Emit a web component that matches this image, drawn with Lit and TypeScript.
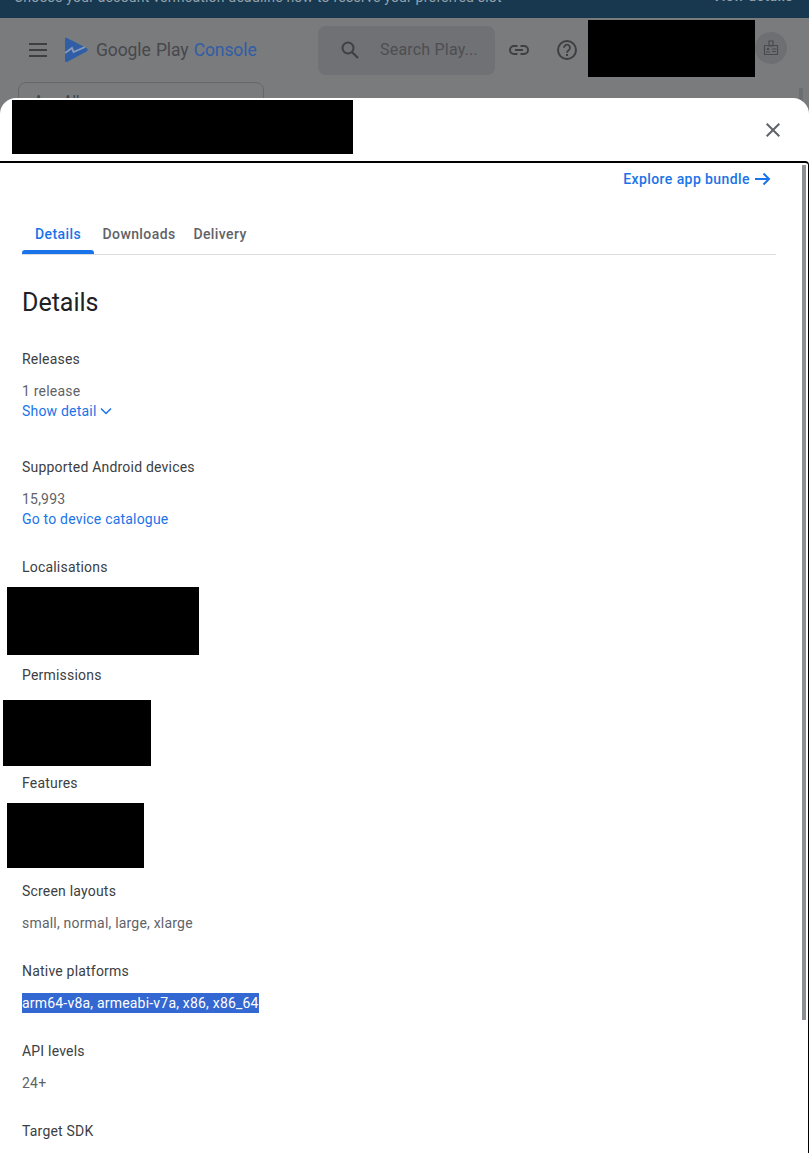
import { LitElement, html, css, svg } from "lit";
import { customElement } from "lit/decorators.js";

const arrow = svg`<path d="M1 8h14M9.5 2.500 15 8l-5.500 5.500" fill="none" stroke="currentColor" stroke-width="2"/>`;
const chevron = svg`<path d="M1 1.500 6 6.500l5-5" fill="none" stroke="currentColor" stroke-width="1.500"/>`;

@customElement("app-root")
export class AppRoot extends LitElement {
  static styles = css`
    :host {
      display: block;
      position: relative;
      width: 809px;
      height: 1153px;
      overflow: hidden;
      background: #7a7b7d;
      font-family: Roboto, "Liberation Sans", sans-serif;
      font-size: 14px;
      line-height: 20px;
      letter-spacing: 0.2px;
    }
    svg { display: block; flex: none; }
    .banner {
      box-sizing: border-box;
      height: 18px;
      background: #17384f;
      color: #96a3ad;
      padding: 0 16px 11px 14px;
      display: flex;
      justify-content: space-between;
      align-items: flex-end;
      overflow: hidden;
    }
    .banner b { font-weight: 500; letter-spacing: 0.4px; position: relative; top: -1px; }
    .header {
      height: 64px;
      display: flex;
      align-items: center;
      padding-left: 29px;
      color: #3e3f42;
    }
    .menu { margin-right: 18px; }
    .brand {
      margin-left: 8px;
      width: 159px;
      font-size: 17.5px;
      letter-spacing: -0.1px;
      word-spacing: 1px;
      color: #47484c;
      white-space: nowrap;
    }
    .brand span { color: #2f5ea6; }
    .search {
      box-sizing: border-box;
      width: 177px;
      height: 49px;
      margin-left: 63px;
      border-radius: 8px;
      background: #707174;
      display: flex;
      align-items: center;
      padding-left: 23px;
      gap: 21px;
      font-size: 16px;
      color: #4d4e51;
    }
    .link-icon { margin-left: 14px; }
    .help-icon { margin-left: 28px; }
    .top-redact {
      width: 167px;
      height: 57px;
      margin: -3px 0 0 11px;
      background: #000;
    }
    .avatar {
      width: 32px;
      height: 32px;
      margin-top: -4px;
      border-radius: 50%;
      background: #6e6f72;
      display: flex;
      align-items: center;
      justify-content: center;
    }
    .filter {
      box-sizing: border-box;
      width: 246px;
      height: 40px;
      margin-left: 18px;
      border: 1px solid #66676a;
      border-radius: 8px;
      padding: 8px 0 0 15px;
      color: #3e3f42;
    }
    .page-scroll {
      position: absolute;
      left: 799px;
      top: 88px;
      width: 4px;
      height: 30px;
      background: #6d6e71;
    }
    .dialog {
      position: absolute;
      left: 0;
      right: 0;
      top: 98px;
      bottom: 0;
      background: #fff;
      border-radius: 16px 16px 0 0;
      display: flex;
      flex-direction: column;
      overflow: hidden;
    }
    .dialog-head {
      height: 63px;
      flex: none;
      display: flex;
      justify-content: space-between;
      align-items: center;
      padding: 0 29px 0 12px;
    }
    .title-redact {
      width: 341px;
      height: 54px;
      align-self: flex-start;
      margin-top: 2px;
      background: #000;
    }
    .body {
      position: relative;
      flex: 1;
      box-sizing: border-box;
      border-top: 2px solid #000;
      border-right: 1px solid #000;
      border-top-right-radius: 4px;
      padding: 6px 32px 0 22px;
      overflow: hidden;
    }
    .thumb {
      position: absolute;
      left: 802px;
      top: 2px;
      width: 4px;
      height: 855px;
      background: #8b8f94;
    }
    .explore {
      display: flex;
      justify-content: flex-end;
      align-items: center;
      gap: 4px;
      padding-right: 5px;
      color: #1a73e8;
      font-weight: 500;
      letter-spacing: 0.42px;
    }
    .tabs {
      display: flex;
      margin-top: 25px;
      height: 40px;
      border-bottom: 1px solid #dadce0;
      line-height: 40px;
      font-weight: 500;
      letter-spacing: 0.4px;
      color: #5f6368;
    }
    .tab { position: relative; padding: 0 8.5px; min-width: 55px; text-align: center; }
    .tab.active { color: #1a73e8; }
    .tab.active::after {
      content: "";
      position: absolute;
      left: 0;
      right: 0;
      bottom: 0;
      height: 4px;
      border-radius: 3px 3px 0 0;
      background: #1a73e8;
    }
    h1 {
      margin: 32px 0 30px;
      font-size: 25px;
      line-height: 32px;
      font-weight: 400;
      letter-spacing: 0;
      color: #202124;
    }
    .section { position: relative; margin-bottom: 28px; }
    .section.wide { margin-bottom: 36px; }
    .label { color: #3c4043; margin-bottom: 12px; }
    .value { color: #5f6368; }
    .block { height: 48px; }
    .anchor { color: #1a73e8; display: flex; align-items: center; gap: 3px; }
    .selected {
      display: inline-block;
      background: #3367d1;
      color: #fff;
    }
    .redact { position: absolute; background: #000; }
    .r1 { left: -15px; top: 30px; width: 192px; height: 68px; }
    .r2 { left: -19px; top: 35px; width: 148px; height: 66px; }
    .r3 { left: -15px; top: 30px; width: 137px; height: 65px; }
  `;

  private field(label: string, value: string) {
    return html`<div class="section">
      <div class="label">${label}</div>
      <div class="value">${value}</div>
    </div>`;
  }

  private hidden(label: string, cls: string) {
    return html`<div class="section">
      <div class="label">${label}</div>
      <div class="block"></div>
      <div class="redact ${cls}"></div>
    </div>`;
  }

  render() {
    return html`
      <div class="banner">
        <span>Choose your account verification deadline now to reserve your preferred slot</span>
        <b>View details</b>
      </div>
      <div class="header">
        <svg class="menu" width="18" height="14" viewBox="0 0 18 14">
          <path d="M0 1h18M0 7h18M0 13h18" stroke="currentColor" stroke-width="2"/>
        </svg>
        <svg width="23" height="26" viewBox="0 0 23 26">
          <path d="M2 1 21.500 11c1.500 1 1.500 2.500 0 3.400L2 25c-1 .4-2-.1-2-1.200V2C0 1 1 .5 2 1Z" fill="#2f5ea6"/>
          <path d="M0 16 7 11l1.500 4L20 10" fill="none" stroke="#8a9bb8" stroke-width="1.800"/>
        </svg>
        <div class="brand">Google Play <span>Console</span></div>
        <div class="search">
          <svg width="18" height="18" viewBox="0 0 18 18">
            <circle cx="7" cy="7" r="5.500" fill="none" stroke="#3e3f42" stroke-width="2"/>
            <path d="m11 11 6 6" stroke="#3e3f42" stroke-width="2.200"/>
          </svg>
          <span>Search Play...</span>
        </div>
        <svg class="link-icon" width="20" height="10" viewBox="0 0 20 10">
          <path d="M8.500 1H5a4 4 0 0 0 0 8h3.500M11.500 1H15a4 4 0 0 1 0 8h-3.500M6 5h8" fill="none" stroke="currentColor" stroke-width="2"/>
        </svg>
        <svg class="help-icon" width="20" height="20" viewBox="0 0 20 20">
          <circle cx="10" cy="10" r="9" fill="none" stroke="currentColor" stroke-width="2"/>
          <path d="M7 7.800a3 3 0 1 1 4.800 2.300c-1.200.9-1.800 1.300-1.800 2.700" fill="none" stroke="currentColor" stroke-width="1.800"/>
          <rect x="9" y="14" width="2" height="2" fill="currentColor"/>
        </svg>
        <div class="top-redact"></div>
        <div class="avatar">
          <svg width="16" height="16" viewBox="0 0 16 16">
            <path d="M1.500 5.500h13v9h-13zM6 1h4v5H6z" fill="none" stroke="#4a4b4e" stroke-width="1.200"/>
            <circle cx="5" cy="9" r="1.300" fill="#4a4b4e"/>
            <path d="M3 12h4M9 9h4M9 11.500h4" stroke="#4a4b4e"/>
          </svg>
        </div>
      </div>
      <div class="filter">App All</div>
      <div class="page-scroll"></div>
      <div class="dialog">
        <div class="dialog-head">
          <div class="title-redact"></div>
          <svg width="14" height="14" viewBox="0 0 14 14">
            <path d="m.7.7 12.600 12.600M13.300.7.7 13.300" stroke="#5f6368" stroke-width="2"/>
          </svg>
        </div>
        <div class="body">
          <div class="explore">
            Explore app bundle
            <svg width="17" height="16" viewBox="0 0 17 16">${arrow}</svg>
          </div>
          <div class="tabs">
            <div class="tab active">Details</div>
            <div class="tab">Downloads</div>
            <div class="tab">Delivery</div>
          </div>
          <h1>Details</h1>
          <div class="section wide">
            <div class="label">Releases</div>
            <div class="value">1 release</div>
            <div class="anchor">
              Show detail
              <svg width="12" height="8" viewBox="0 0 12 8">${chevron}</svg>
            </div>
          </div>
          <div class="section">
            <div class="label">Supported Android devices</div>
            <div class="value">15,993</div>
            <div class="anchor">Go to device catalogue</div>
          </div>
          ${this.hidden("Localisations", "r1")}
          ${this.hidden("Permissions", "r2")}
          ${this.hidden("Features", "r3")}
          ${this.field("Screen layouts", "small, normal, large, xlarge")}
          <div class="section">
            <div class="label">Native platforms</div>
            <div class="value"><span class="selected">arm64-v8a, armeabi-v7a, x86, x86_64</span></div>
          </div>
          ${this.field("API levels", "24+")}
          ${this.field("Target SDK", "")}
          <div class="thumb"></div>
        </div>
      </div>
    `;
  }
}
